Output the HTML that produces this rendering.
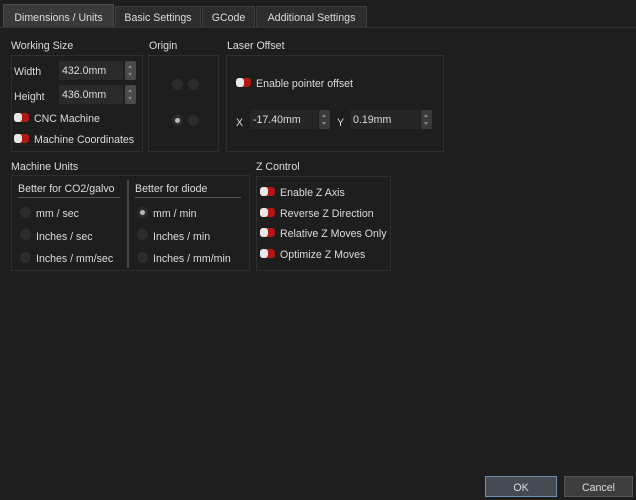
<!DOCTYPE html>
<html><head><style>
*{margin:0;padding:0;box-sizing:border-box}
body{width:636px;height:500px;background:#1e1e1e;font-family:"Liberation Sans",sans-serif;font-size:10.6px;color:#dcdcdc;position:relative;overflow:hidden}
.a{position:absolute;white-space:nowrap;margin-top:2px}
.tab{position:absolute;top:6px;height:21px;background:#2d2d2d;border:1px solid #3c3c3c;border-bottom:none;text-align:center;line-height:22px;font-size:10.6px}
.box{position:absolute;border:1px solid #2e2e2e}
.inp{position:absolute;height:19px;background:#2a2a2a;line-height:21px;padding-left:3px}
.spin{position:absolute;width:11px;height:19px;background:#4a4a4a;border-radius:2px}
.spin:before,.spin:after{content:"";position:absolute;left:3px;border-left:2.5px solid transparent;border-right:2.5px solid transparent}
.spin:before{top:4px;border-bottom:3px solid #888}
.spin:after{bottom:4px;border-top:3px solid #888}
.tg{position:absolute;width:15px;height:9px;border-radius:3px;background:#b01818}
.tg:before{content:"";position:absolute;left:0;top:0;width:8px;height:9px;border-radius:3px;background:#e8e8e8}
.dot{position:absolute;width:11px;height:11px;border-radius:50%;background:#2c2c2c}
.dot.on:after{content:"";position:absolute;left:3px;top:3px;width:5px;height:5px;border-radius:50%;background:#bbb}
.btn{position:absolute;height:21px;text-align:center;line-height:22px;color:#ddd}
.ln{position:absolute}
</style></head><body>
<div class="tab" style="left:3px;top:4px;width:111px;height:23px;background:#3a3a3a;border-color:#4a4a4a;line-height:26px">Dimensions / Units</div>
<div class="tab" style="left:115px;width:86px">Basic Settings</div>
<div class="tab" style="left:202px;width:53px">GCode</div>
<div class="tab" style="left:256px;width:111px">Additional Settings</div>
<div class="ln" style="left:0;top:27px;width:636px;height:1px;background:#333"></div>

<div class="a" style="left:11px;top:38px">Working Size</div>
<div class="box" style="left:11px;top:55px;width:132px;height:97px"></div>
<div class="a" style="left:14px;top:64px">Width</div>
<div class="inp" style="left:59px;top:61px;width:64px">432.0mm</div><div class="spin" style="left:125px;top:61px"></div>
<div class="a" style="left:14px;top:89px">Height</div>
<div class="inp" style="left:59px;top:85px;width:64px">436.0mm</div><div class="spin" style="left:125px;top:85px"></div>
<div class="tg" style="left:14px;top:113px"></div><div class="a" style="left:34px;top:111px">CNC Machine</div>
<div class="tg" style="left:14px;top:134px"></div><div class="a" style="left:34px;top:132px">Machine Coordinates</div>

<div class="a" style="left:149px;top:38px">Origin</div>
<div class="box" style="left:148px;top:55px;width:71px;height:97px"></div>
<div class="dot" style="left:172px;top:79px"></div><div class="dot" style="left:188px;top:79px"></div>
<div class="dot on" style="left:172px;top:115px"></div><div class="dot" style="left:188px;top:115px"></div>

<div class="a" style="left:227px;top:38px">Laser Offset</div>
<div class="box" style="left:226px;top:55px;width:218px;height:97px"></div>
<div class="tg" style="left:236px;top:78px"></div><div class="a" style="left:256px;top:76px">Enable pointer offset</div>
<div class="a" style="left:236px;top:115px">X</div>
<div class="inp" style="left:250px;top:110px;width:68px;background:#262626">-17.40mm</div><div class="spin" style="left:319px;top:110px;background:#3a3a3a"></div>
<div class="a" style="left:337px;top:115px">Y</div>
<div class="inp" style="left:350px;top:110px;width:70px;background:#262626">0.19mm</div><div class="spin" style="left:421px;top:110px;background:#3a3a3a"></div>

<div class="a" style="left:11px;top:159px">Machine Units</div>
<div class="box" style="left:11px;top:175px;width:239px;height:96px"></div>
<div class="a" style="left:18px;top:181px">Better for CO2/galvo</div>
<div class="ln" style="left:18px;top:197px;width:102px;height:1px;background:#555"></div>
<div class="ln" style="left:127px;top:180px;width:2px;height:88px;background:#444"></div>
<div class="a" style="left:135px;top:181px">Better for diode</div>
<div class="ln" style="left:135px;top:197px;width:106px;height:1px;background:#555"></div>
<div class="dot" style="left:20px;top:207px"></div><div class="a" style="left:36px;top:206px">mm / sec</div>
<div class="dot" style="left:20px;top:229px"></div><div class="a" style="left:36px;top:229px">Inches / sec</div>
<div class="dot" style="left:20px;top:252px"></div><div class="a" style="left:36px;top:251px">Inches / mm/sec</div>
<div class="dot on" style="left:137px;top:207px"></div><div class="a" style="left:153px;top:206px">mm / min</div>
<div class="dot" style="left:137px;top:229px"></div><div class="a" style="left:153px;top:229px">Inches / min</div>
<div class="dot" style="left:137px;top:252px"></div><div class="a" style="left:153px;top:251px">Inches / mm/min</div>

<div class="a" style="left:256px;top:159px">Z Control</div>
<div class="box" style="left:256px;top:176px;width:135px;height:95px"></div>
<div class="tg" style="left:260px;top:187px"></div><div class="a" style="left:280px;top:185px">Enable Z Axis</div>
<div class="tg" style="left:260px;top:208px"></div><div class="a" style="left:280px;top:206px">Reverse Z Direction</div>
<div class="tg" style="left:260px;top:228px"></div><div class="a" style="left:280px;top:226px">Relative Z Moves Only</div>
<div class="tg" style="left:260px;top:249px"></div><div class="a" style="left:280px;top:247px">Optimize Z Moves</div>

<div class="btn" style="left:485px;top:476px;width:72px;background:#454b52;border:1px solid #6c8fb0">OK</div>
<div class="btn" style="left:564px;top:476px;width:69px;background:#3e3e3e;border:1px solid #555">Cancel</div>
</body></html>
